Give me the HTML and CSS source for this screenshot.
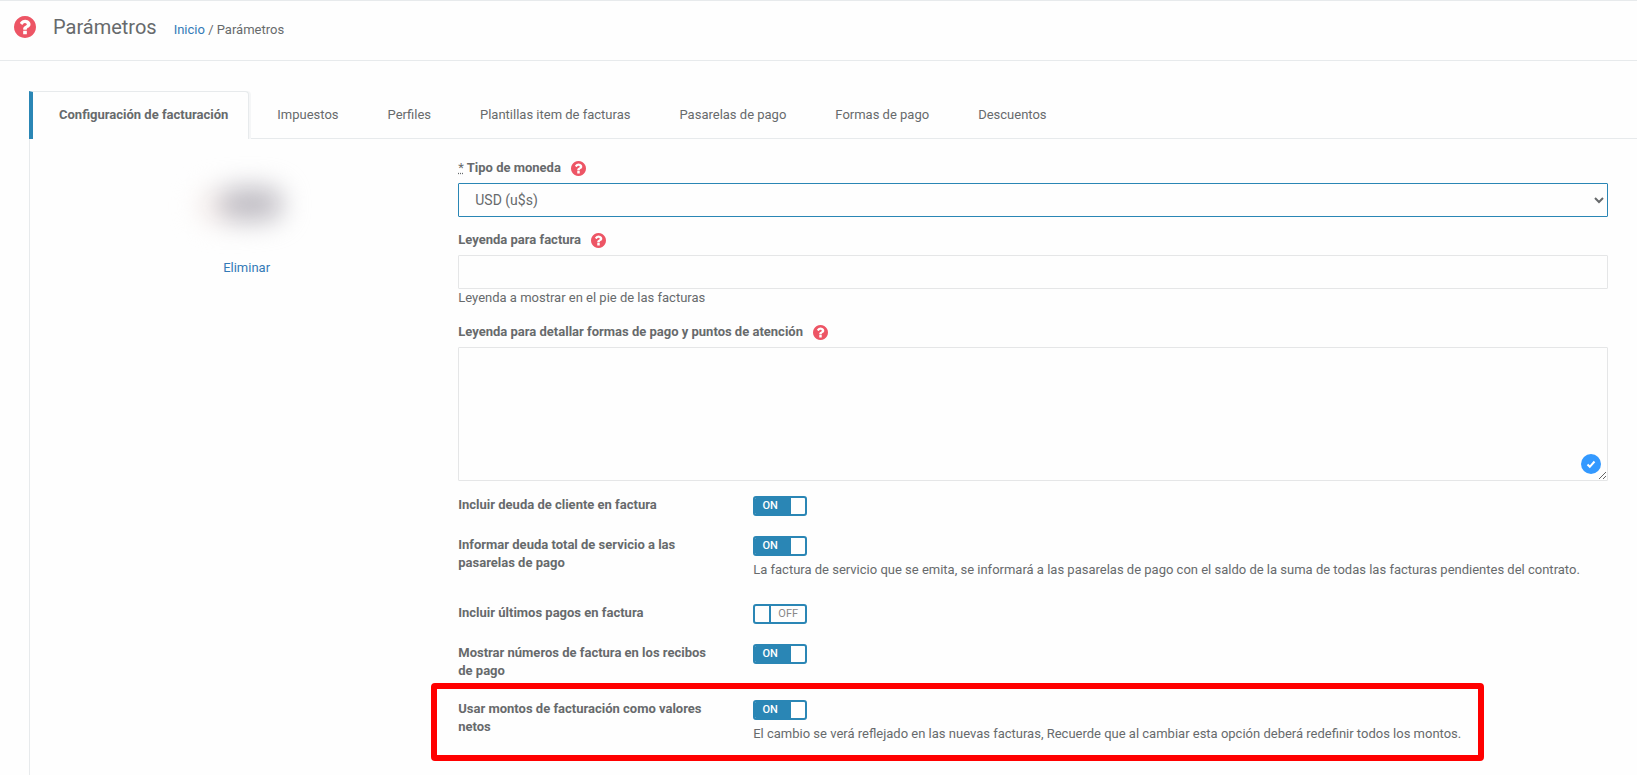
FILE: index.html
```html
<!DOCTYPE html>
<html lang="es">
<head>
<meta charset="utf-8">
<title>Parámetros</title>
<meta name="viewport" content="width=device-width, initial-scale=1">
<link rel="stylesheet" href="styles.css">
</head>
<body>
<svg class="sprite" aria-hidden="true">
  <symbol id="help" viewBox="128 128 1536 1536"><path d="M1024 1376v-192q0-14-9-23t-23-9h-192q-14 0-23 9t-9 23v192q0 14 9 23t23 9h192q14 0 23-9t9-23zm256-672q0-88-55.500-163t-138.500-116-170-41q-243 0-371 213-15 24 8 42l132 100q7 6 19 6 16 0 25-12 53-68 86-92 34-24 86-24 48 0 85.500 26t37.500 59q0 38-20 61t-68 45q-63 28-115.500 86.500t-52.500 125.500v36q0 14 9 23t23 9h192q14 0 23-9t9-23q0-19 21.500-49.500t54.500-49.500q32-18 49-28.500t46-35 44.500-48 28-60.500 12.500-81zm384 192q0 209-103 385.500t-279.500 279.500-385.500 103-385.500-103-279.500-279.500-103-385.500 103-385.500 279.500-279.500 385.500-103 385.500 103 279.500 279.500 103 385.500z"/></symbol>
</svg>

<header class="page-header">
  <svg class="help help-large" role="img" aria-label="Ayuda"><use href="#help"/></svg>
  <h1 class="page-title">Parámetros</h1>
  <nav class="breadcrumb"><a href="#">Inicio</a> / Parámetros</nav>
</header>

<main class="content">
  <nav class="tabs">
    <a class="tab tab-active" href="#">Configuración de facturación</a>
    <a class="tab" href="#">Impuestos</a>
    <a class="tab" href="#">Perfiles</a>
    <a class="tab" href="#">Plantillas item de facturas</a>
    <a class="tab" href="#">Pasarelas de pago</a>
    <a class="tab" href="#">Formas de pago</a>
    <a class="tab" href="#">Descuentos</a>
  </nav>

  <div class="panel">
    <aside class="logo">
      <div class="logo-image"><div class="logo-blur"></div></div>
      <a href="#">Eliminar</a>
    </aside>

    <form class="form">
      <div class="label-line">
        <label for="moneda"><abbr title="requerido">*</abbr> Tipo de moneda</label>
        <svg class="help" role="img" aria-label="Ayuda"><use href="#help"/></svg>
      </div>
      <div class="select-wrap">
        <select class="control control-select" id="moneda"><option>USD (u$s)</option></select>
        <svg class="chevron" viewBox="0 0 10 7" aria-hidden="true"><path d="M1 1l4 4 4-4"/></svg>
      </div>

      <div class="label-line">
        <label for="leyenda">Leyenda para factura</label>
        <svg class="help" role="img" aria-label="Ayuda"><use href="#help"/></svg>
      </div>
      <input class="control" type="text" id="leyenda">
      <p class="hint">Leyenda a mostrar en el pie de las facturas</p>

      <div class="label-line">
        <label for="detalle">Leyenda para detallar formas de pago y puntos de atención</label>
        <svg class="help" role="img" aria-label="Ayuda"><use href="#help"/></svg>
      </div>
      <div class="area-wrap">
        <textarea class="control control-area" id="detalle"></textarea>
        <svg class="checked" viewBox="0 0 20 20" aria-hidden="true"><circle cx="10" cy="10" r="10"/><path d="M6.500 10.500l2.300 2.300 4.700-5.300"/></svg>
      </div>

      <div class="options">
        <div class="option">
          <label class="option-label" for="o1">Incluir deuda de cliente en factura</label>
          <div class="option-body">
            <div class="switch"><input type="checkbox" id="o1" checked><span class="on">ON</span><span class="knob"></span><span class="off">OFF</span></div>
          </div>
        </div>
        <div class="option">
          <label class="option-label" for="o2">Informar deuda total de servicio a las pasarelas de pago</label>
          <div class="option-body">
            <div class="switch"><input type="checkbox" id="o2" checked><span class="on">ON</span><span class="knob"></span><span class="off">OFF</span></div>
            <p class="option-hint">La factura de servicio que se emita, se informará a las pasarelas de pago con el saldo de la suma de todas las facturas pendientes del contrato.</p>
          </div>
        </div>
        <div class="option">
          <label class="option-label" for="o3">Incluir últimos pagos en factura</label>
          <div class="option-body">
            <div class="switch"><input type="checkbox" id="o3"><span class="on">ON</span><span class="knob"></span><span class="off">OFF</span></div>
          </div>
        </div>
        <div class="option">
          <label class="option-label" for="o4">Mostrar números de factura en los recibos de pago</label>
          <div class="option-body">
            <div class="switch"><input type="checkbox" id="o4" checked><span class="on">ON</span><span class="knob"></span><span class="off">OFF</span></div>
          </div>
        </div>
        <div class="option option-marked">
          <label class="option-label" for="o5">Usar montos de facturación como valores netos</label>
          <div class="option-body">
            <div class="switch"><input type="checkbox" id="o5" checked><span class="on">ON</span><span class="knob"></span><span class="off">OFF</span></div>
            <p class="option-hint">El cambio se verá reflejado en las nuevas facturas, Recuerde que al cambiar esta opción deberá redefinir todos los montos.</p>
          </div>
        </div>
      </div>
    </form>
  </div>
</main>
</body>
</html>
```
FILE: styles.css
```css
* { box-sizing: border-box; }

body {
  margin: 0;
  min-height: 100vh;
  display: flex;
  flex-direction: column;
  background: #fefefe;
  color: #676a6c;
  font: 13px/18px Roboto, "Liberation Sans", sans-serif;
}

a { color: #337ab7; text-decoration: none; }
p { margin: 0; }
.sprite { display: none; }

.page-header {
  display: flex;
  align-items: center;
  height: 61px;
  padding: 0 14px 8px;
  border-top: 1px solid #e7eaec;
  border-bottom: 1px solid #e7eaec;
}
.page-title { margin: 0 17px; font-size: 20px; line-height: 24px; font-weight: 400; }
.breadcrumb { padding-top: 6px; }

.help { width: 15px; height: 15px; fill: #ed5565; flex: none; }
.help-large { width: 22px; height: 22px; }

.content {
  flex: 1;
  display: flex;
  flex-direction: column;
  padding: 30px 0 0 29px;
}

.tabs {
  display: flex;
  gap: 2px;
  border-bottom: 1px solid #e7eaec;
}
.tab {
  padding: 14px 20px 13px 25px;
  border: 1px solid transparent;
  color: #676a6c;
  line-height: 18px;
}
.tab-active {
  margin-bottom: -1px;
  padding-left: 26px;
  border-color: #e7eaec;
  border-left: 4px solid #2a86b5;
  border-bottom: 0;
  border-top-right-radius: 4px;
  background: #fefefe;
  box-shadow: 2px 0 0 #f5f6f7;
  font-weight: 700;
}

.panel {
  flex: 1;
  display: grid;
  grid-template-columns: 1fr 3fr;
  padding: 20px 14px 0 20px;
  border-left: 1px solid #e7eaec;
}

.logo { display: flex; flex-direction: column; align-items: center; gap: 18px; }
.logo-image {
  display: flex;
  align-items: center;
  justify-content: center;
  width: 120px;
  height: 82px;
  padding: 8px 0 0 8px;
}
.logo-blur {
  width: 64px;
  height: 34px;
  border-radius: 17px;
  background: #bfbcc3;
  box-shadow: -22px 2px 0 #f6eeec;
  filter: blur(13px);
}

.form { padding: 0 15px; }
.label-line {
  display: flex;
  align-items: center;
  gap: 10px;
  margin-bottom: 6px;
  font-weight: 700;
}
.label-line abbr { font-weight: 400; }

.control {
  display: block;
  width: 100%;
  height: 34px;
  padding: 6px 12px;
  border: 1px solid #e5e6e7;
  border-radius: 1px;
  background: #fefefe;
  color: #676a6c;
  font: 14px/20px Roboto, "Liberation Sans", sans-serif;
}
.select-wrap { position: relative; margin-bottom: 14px; }
.control-select { appearance: none; padding: 6px 16px; border-color: #2a86b5; }
.chevron {
  position: absolute;
  right: 4px;
  top: 14px;
  width: 10px;
  height: 7px;
  fill: none;
  stroke: #676a6c;
  stroke-width: 2;
}
.hint { margin-bottom: 16px; }
.area-wrap { position: relative; }
.control-area { height: 134px; resize: vertical; }
.checked {
  position: absolute;
  right: 7px;
  bottom: 7px;
  width: 20px;
  height: 20px;
  fill: #3399ff;
}
.checked path { fill: none; stroke: #fff; stroke-width: 2; }

.options { display: grid; gap: 20px; padding-top: 15px; }
.option { position: relative; display: flex; margin: 0 -15px; }
.option-label { width: 25%; padding: 0 15px; font-weight: 700; }
.option-body { width: 75%; padding: 0 15px; }
.option-hint { margin: 5px 0; }
.option-marked::after {
  content: "";
  position: absolute;
  top: -17px;
  right: 139px;
  bottom: -13px;
  left: -12px;
  border: 6px solid #f00;
  border-radius: 4px;
  pointer-events: none;
}

.switch {
  position: relative;
  display: flex;
  width: 54px;
  height: 20px;
  border: 2px solid #2a86b5;
  border-radius: 3px;
  background: #fefefe;
  font-size: 11px;
  line-height: 15px;
  text-align: center;
  overflow: hidden;
}
.switch input { position: absolute; inset: 0; width: 100%; height: 100%; margin: 0; opacity: 0; }
.switch .on { display: none; flex: 1; padding-right: 6px; background: #2a86b5; color: #fff; font-weight: 500; }
.switch .off { flex: 1; border-left: 2px solid #2a86b5; color: #888; }
.switch .knob { width: 14px; }
.switch input:checked ~ .on { display: block; }
.switch input:checked ~ .off { display: none; }
```
